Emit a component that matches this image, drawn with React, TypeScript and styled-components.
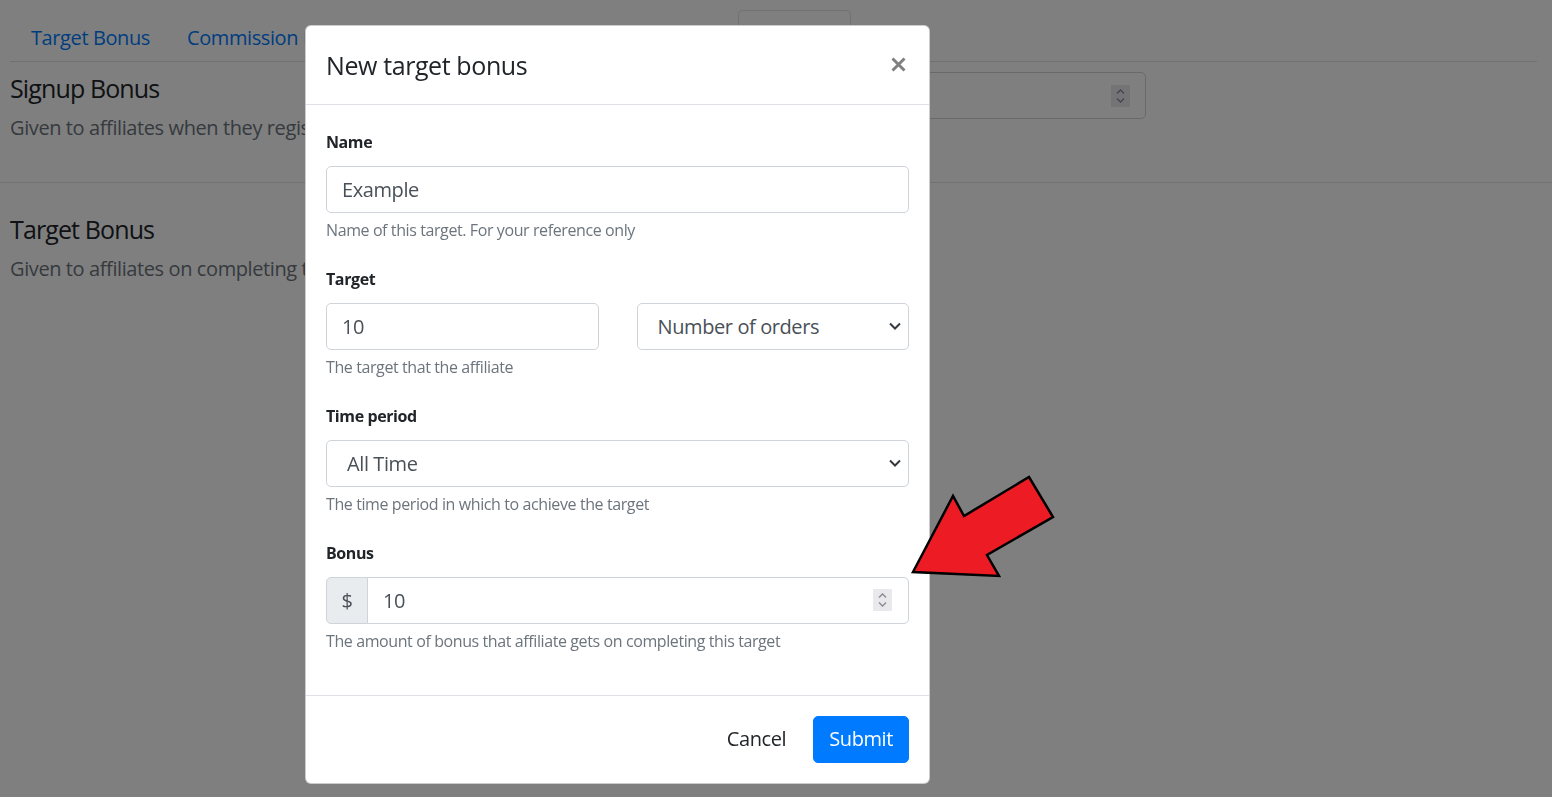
import React from "react";
import styled, { createGlobalStyle, css } from "styled-components";

const Global = createGlobalStyle`
  html, body { margin: 0; padding: 0; }
  body {
    font-family: "Open Sans", "Noto Sans", sans-serif;
    color: #212529;
    background: #fff;
    width: 1552px;
    height: 797px;
    overflow: hidden;
    letter-spacing: -0.025em;
  }
  * { box-sizing: border-box; }
  input, button, select { font-family: inherit; letter-spacing: inherit; }
`;

const Page = styled.div`
  height: 797px;
  overflow: hidden;
`;

const TabsNav = styled.nav`
  display: flex;
  margin: 10px 15px 0 10px;
  height: 52px;
  border-bottom: 1px solid #dee2e6;
`;

const Tab = styled.div<{ $w: number; $active?: boolean }>`
  width: ${(p) => p.$w}px;
  padding: 12px 20px 8px;
  font-size: 20px;
  line-height: 30px;
  color: #007bff;
  white-space: nowrap;
  overflow: hidden;
  border: 1px solid transparent;
  border-radius: 5px 5px 0 0;
  margin-bottom: -1px;
  ${(p) =>
    p.$active &&
    css`
      color: #495057;
      background: #fff;
      border-color: #dee2e6 #dee2e6 #fff;
    `}
`;

const Section = styled.section<{ $pt: number; $pb: number; $line?: boolean }>`
  display: flex;
  align-items: flex-start;
  padding: ${(p) => p.$pt}px 0 ${(p) => p.$pb}px 10px;
  border-bottom: ${(p) => (p.$line ? "1px solid #dee2e6" : "none")};
`;

const SectionInfo = styled.div`
  flex: 1;
`;

const SectionTitle = styled.h5`
  margin: 0 0 10px;
  font-size: 25px;
  line-height: 30px;
  font-weight: 400;
  color: #212529;
  letter-spacing: -0.035em;
`;

const SectionText = styled.p`
  margin: 0;
  font-size: 20px;
  line-height: 30px;
  color: #6c757d;
`;

const SideInput = styled.div`
  width: 420px;
  height: 47px;
  margin: -1px 406px 0 0;
  border: 1px solid #ced4da;
  border-radius: 5px;
  background: #fff;
  display: flex;
  align-items: center;
  justify-content: flex-end;
  padding-right: 15px;
`;

const Backdrop = styled.div`
  position: fixed;
  inset: 0;
  background: rgba(0, 0, 0, 0.5);
`;

const ModalLayer = styled.div`
  position: fixed;
  inset: 0;
  padding: 25px 0 0 305px;
`;

const Modal = styled.div`
  width: 625px;
  background: #fff;
  border: 1px solid rgba(0, 0, 0, 0.2);
  border-radius: 6px;
  display: flex;
  flex-direction: column;
`;

const ModalHeader = styled.div`
  display: flex;
  align-items: center;
  justify-content: space-between;
  padding: 21px 20px 19px 20px;
  border-bottom: 1px solid #dee2e6;
`;

const ModalTitle = styled.h5`
  margin: 0;
  font-size: 25px;
  line-height: 37.5px;
  font-weight: 400;
  color: #212529;
`;

const CloseButton = styled.button`
  border: 0;
  background: transparent;
  padding: 0;
  margin: 0 3px 2px 0;
  display: flex;
  cursor: pointer;
`;

const ModalBody = styled.div`
  padding: 20px 20px 22px;
`;

const FormGroup = styled.div`
  margin-bottom: 20px;
`;

const Label = styled.label`
  display: block;
  font-size: 20px;
  line-height: 28px;
  padding-top: 2px;
  margin-bottom: 10px;
`;

const LabelText = styled.strong`
  font-size: 16px;
  font-weight: 700;
  color: #212529;
`;

const fieldBase = css`
  height: 47px;
  border: 1px solid #ced4da;
  border-radius: 5px;
  background: #fff;
  font-size: 20px;
  color: #495057;
`;

const TextInput = styled.input`
  ${fieldBase};
  display: block;
  width: 100%;
  padding: 0 15px;
  outline: none;
`;

const SelectBox = styled.div`
  ${fieldBase};
  display: flex;
  align-items: center;
  justify-content: space-between;
  padding: 0 6px 0 20px;
`;

const Help = styled.small`
  display: block;
  margin-top: 5px;
  font-size: 16px;
  line-height: 24px;
  color: #6c757d;
`;

const TwoCols = styled.div`
  display: grid;
  grid-template-columns: 1fr 1fr;
  column-gap: 38px;
`;

const InputGroup = styled.div`
  display: flex;
  height: 47px;
`;

const Prepend = styled.span`
  width: 42px;
  display: flex;
  align-items: center;
  justify-content: center;
  background: #e9ecef;
  border: 1px solid #ced4da;
  border-radius: 5px 0 0 5px;
  font-size: 20px;
  color: #495057;
`;

const NumberBox = styled.div`
  ${fieldBase};
  flex: 1;
  margin-left: -1px;
  border-radius: 0 5px 5px 0;
  display: flex;
  align-items: center;
  padding: 0 16px 0 15px;
`;

const BareInput = styled.input`
  flex: 1;
  min-width: 0;
  border: 0;
  outline: none;
  padding: 0;
  font-size: 20px;
  color: #495057;
  background: transparent;
`;

const ModalFooter = styled.div`
  display: flex;
  justify-content: flex-end;
  align-items: center;
  gap: 12px;
  padding: 20px 20px 20px;
  border-top: 1px solid #dee2e6;
`;

const Button = styled.button<{ $primary?: boolean }>`
  height: 47px;
  padding: 0 ${(p) => (p.$primary ? 15 : 14)}px;
  border: 1px solid ${(p) => (p.$primary ? "#007bff" : "transparent")};
  border-radius: 5px;
  background: ${(p) => (p.$primary ? "#007bff" : "transparent")};
  color: ${(p) => (p.$primary ? "#fff" : "#212529")};
  font-size: 20px;
  line-height: 30px;
  cursor: pointer;
`;

const ArrowMark = styled.svg`
  position: fixed;
  left: 905px;
  top: 470px;
  overflow: visible;
`;

const Chevron = () => (
  <svg width="14" height="10" viewBox="0 0 14 10">
    <path d="M2 2.5 L7 7.5 L12 2.5" fill="none" stroke="#343a40" strokeWidth="2" />
  </svg>
);

const Spinner = () => (
  <svg width="19" height="22" viewBox="0 0 19 22">
    <rect x="0" y="0" width="19" height="22" fill="#e9e9ed" />
    <path d="M6 8.5 L9.5 5 L13 8.5" fill="none" stroke="#8a8a8e" strokeWidth="1.3" />
    <path d="M6 13.5 L9.5 17 L13 13.5" fill="none" stroke="#8a8a8e" strokeWidth="1.3" />
  </svg>
);

const CloseIcon = () => (
  <svg width="15" height="15" viewBox="0 0 15 15">
    <path d="M1.5 1.5 L13.5 13.5 M13.5 1.5 L1.5 13.5" stroke="#808080" strokeWidth="3" />
  </svg>
);

export default function App() {
  return (
    <>
      <Global />
      <Page>
        <TabsNav>
          <Tab $w={156}>Target Bonus</Tab>
          <Tab $w={200}>Commission Bonus</Tab>
          <Tab $w={186}>Signup Bonus</Tab>
          <Tab $w={186}>Referral Bonus</Tab>
          <Tab $w={113} $active>
            Settings
          </Tab>
        </TabsNav>
        <Section $pt={11} $pb={39} $line>
          <SectionInfo>
            <SectionTitle>Signup Bonus</SectionTitle>
            <SectionText>Given to affiliates when they register</SectionText>
          </SectionInfo>
          <SideInput>
            <Spinner />
          </SideInput>
        </Section>
        <Section $pt={31} $pb={20}>
          <SectionInfo>
            <SectionTitle>Target Bonus</SectionTitle>
            <SectionText>Given to affiliates on completing targets</SectionText>
          </SectionInfo>
        </Section>
      </Page>

      <Backdrop />

      <ModalLayer>
        <Modal role="dialog">
          <ModalHeader>
            <ModalTitle>New target bonus</ModalTitle>
            <CloseButton aria-label="Close">
              <CloseIcon />
            </CloseButton>
          </ModalHeader>
          <ModalBody>
            <FormGroup>
              <Label>
                <LabelText>Name</LabelText>
              </Label>
              <TextInput readOnly value="Example" />
              <Help>Name of this target. For your reference only</Help>
            </FormGroup>
            <FormGroup>
              <Label>
                <LabelText>Target</LabelText>
              </Label>
              <TwoCols>
                <TextInput readOnly value="10" />
                <SelectBox>
                  <span>Number of orders</span>
                  <Chevron />
                </SelectBox>
              </TwoCols>
              <Help>The target that the affiliate</Help>
            </FormGroup>
            <FormGroup>
              <Label>
                <LabelText>Time period</LabelText>
              </Label>
              <SelectBox>
                <span>All Time</span>
                <Chevron />
              </SelectBox>
              <Help>The time period in which to achieve the target</Help>
            </FormGroup>
            <FormGroup>
              <Label>
                <LabelText>Bonus</LabelText>
              </Label>
              <InputGroup>
                <Prepend>$</Prepend>
                <NumberBox>
                  <BareInput readOnly value="10" />
                  <Spinner />
                </NumberBox>
              </InputGroup>
              <Help>The amount of bonus that affiliate gets on completing this target</Help>
            </FormGroup>
          </ModalBody>
          <ModalFooter>
            <Button>Cancel</Button>
            <Button $primary>Submit</Button>
          </ModalFooter>
        </Modal>
      </ModalLayer>

      <ArrowMark width="160" height="115" viewBox="0 0 160 115">
        <polygon
          points="8,102 48,26 59,46 124,7 148,47 82,85 94,106"
          fill="#ed1c24"
          stroke="#000"
          strokeWidth="2.5"
          strokeLinejoin="miter"
        />
      </ArrowMark>
    </>
  );
}
